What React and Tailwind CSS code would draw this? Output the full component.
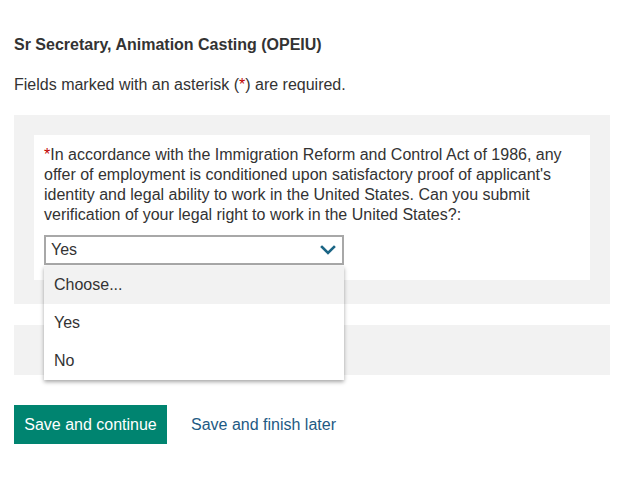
import React, { useState } from "react";

const options = ["Choose...", "Yes", "No"];

const App = () => {
  const [value] = useState("Yes");

  return (
    <div className="min-h-screen bg-white px-[14px] pt-[35px] font-['Liberation_Sans',Arial,sans-serif] text-[#333333]">
      <h1 className="text-[16px] font-bold leading-[20px]">Sr Secretary, Animation Casting (OPEIU)</h1>
      <p className="mt-[20px] text-[16px] leading-[20px]">
        Fields marked with an asterisk (<span className="text-[#c00000]">*</span>) are required.
      </p>

      <div className="mt-[20px] bg-[#f2f2f2] px-[20px] pt-[20px] pb-[24px]">
        <div className="bg-white px-[10px] pt-[10px] pb-[15px]">
          <p className="text-[16px] leading-[20px]">
            <span className="text-[#c00000]">*</span>In accordance with the Immigration Reform and Control Act of 1986, any offer of employment is conditioned upon satisfactory proof of applicant's identity and legal ability to work in the United States. Can you submit verification of your legal right to work in the United States?:
          </p>
          <div className="relative mt-[10px] w-[300px]">
            <div className="flex h-[30px] items-center justify-between border-2 border-[#a8a8a8] bg-white pl-[5px] pr-[6px] text-[16px]">
              <span>{value}</span>
              <svg width="16" height="10" viewBox="0 0 16 10" fill="none">
                <path d="M2 2l6 6 6-6" stroke="#1b6585" strokeWidth="2.6" strokeLinecap="square" />
              </svg>
            </div>
            <ul className="absolute left-0 top-[31px] z-10 w-[300px] bg-white shadow-[0_2px_4px_rgba(0,0,0,0.35)]">
              {options.map((o, i) => (
                <li
                  key={o}
                  className={
                    i === 0
                      ? "flex h-[38px] items-center bg-[#f2f2f2] pl-[10px] text-[16px]"
                      : "flex h-[38px] items-center pl-[10px] text-[16px]"
                  }
                >
                  {o}
                </li>
              ))}
            </ul>
          </div>
        </div>
      </div>

      <div className="mt-[21px] h-[50px] bg-[#f2f2f2]" />

      <div className="mt-[30px] flex items-center gap-[24px]">
        <button className="h-[39px] w-[153px] bg-[#008470] text-[16px] text-white">Save and continue</button>
        <a href="#" className="text-[16px] text-[#1e5a84]">Save and finish later</a>
      </div>
    </div>
  );
};

export default App;
